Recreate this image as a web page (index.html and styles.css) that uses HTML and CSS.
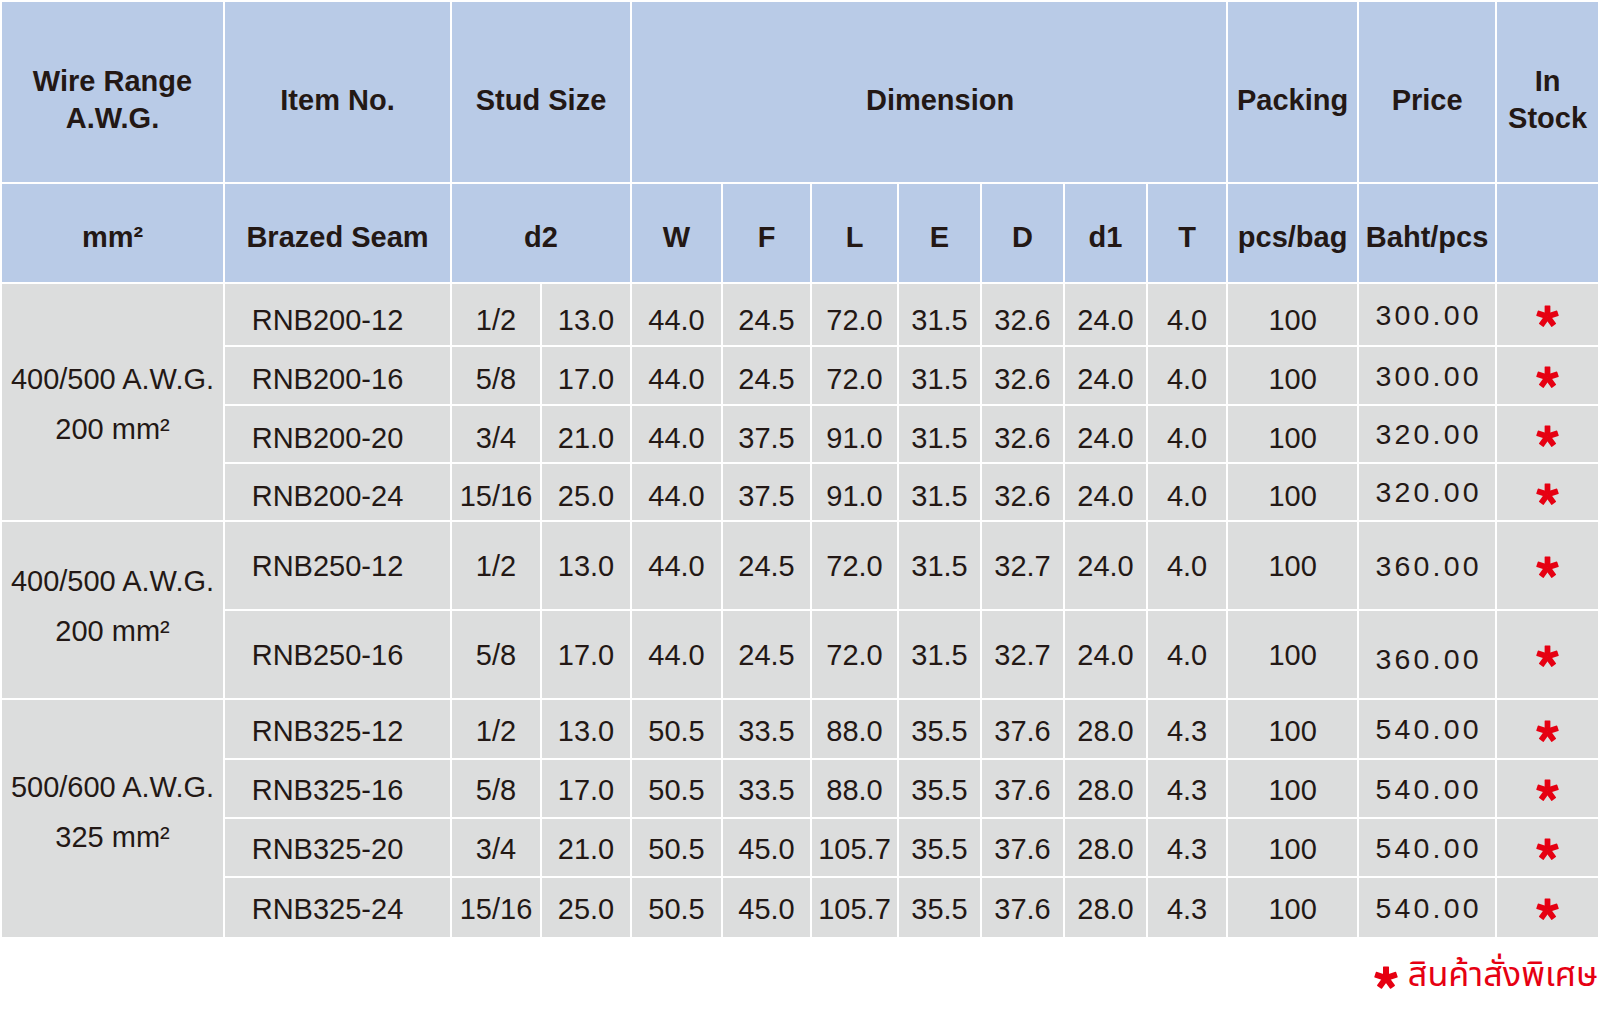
FILE: index.html
```html
<!DOCTYPE html>
<html lang="th">
<head>
<meta charset="utf-8">
<title>RNB Brazed Seam</title>
<link rel="stylesheet" href="styles.css">
</head>
<body>
<svg class="defs" width="0" height="0" aria-hidden="true">
  <defs>
    <g id="star">
      <rect x="-3" y="-11.5" width="6" height="11.5" rx="0.6"/>
      <rect x="-3" y="-11.5" width="6" height="11.5" rx="0.6" transform="rotate(72)"/>
      <rect x="-3" y="-11.5" width="6" height="11.5" rx="0.6" transform="rotate(144)"/>
      <rect x="-3" y="-11.5" width="6" height="11.5" rx="0.6" transform="rotate(216)"/>
      <rect x="-3" y="-11.5" width="6" height="11.5" rx="0.6" transform="rotate(288)"/>
    </g>
  </defs>
</svg>
<table class="spec">
  <colgroup>
    <col class="c-awg"><col class="c-item"><col class="c-d2a"><col class="c-d2b">
    <col class="c-w"><col class="c-f"><col class="c-l"><col class="c-e"><col class="c-d"><col class="c-d1"><col class="c-t">
    <col class="c-pack"><col class="c-price"><col class="c-stock">
  </colgroup>
  <thead>
    <tr class="h1">
      <th>Wire Range<br>A.W.G.</th>
      <th>Item No.</th>
      <th colspan="2">Stud Size</th>
      <th colspan="7" class="dim">Dimension</th>
      <th>Packing</th>
      <th>Price</th>
      <th>In<br>Stock</th>
    </tr>
    <tr class="h2">
      <th>mm²</th>
      <th>Brazed Seam</th>
      <th colspan="2">d2</th>
      <th>W</th><th>F</th><th>L</th><th>E</th><th>D</th><th>d1</th><th>T</th>
      <th>pcs/bag</th>
      <th>Baht/pcs</th>
      <th></th>
    </tr>
  </thead>
  <tbody>
    <tr class="r61">
      <td class="grp g1" rowspan="4"><div class="lbl">400/500 A.W.G.<br>200 mm²</div></td>
      <td class="item">RNB200-12</td><td>1/2</td><td>13.0</td>
      <td>44.0</td><td>24.5</td><td>72.0</td><td>31.5</td><td>32.6</td><td>24.0</td><td>4.0</td>
      <td>100</td><td class="price">300.00</td><td class="stock"><svg class="ast" viewBox="-12 -12 24 24"><use href="#star"/></svg></td>
    </tr>
    <tr class="r57">
      <td class="item">RNB200-16</td><td>5/8</td><td>17.0</td>
      <td>44.0</td><td>24.5</td><td>72.0</td><td>31.5</td><td>32.6</td><td>24.0</td><td>4.0</td>
      <td>100</td><td class="price">300.00</td><td class="stock"><svg class="ast" viewBox="-12 -12 24 24"><use href="#star"/></svg></td>
    </tr>
    <tr class="r56">
      <td class="item">RNB200-20</td><td>3/4</td><td>21.0</td>
      <td>44.0</td><td>37.5</td><td>91.0</td><td>31.5</td><td>32.6</td><td>24.0</td><td>4.0</td>
      <td>100</td><td class="price">320.00</td><td class="stock"><svg class="ast" viewBox="-12 -12 24 24"><use href="#star"/></svg></td>
    </tr>
    <tr class="r56">
      <td class="item">RNB200-24</td><td>15/16</td><td>25.0</td>
      <td>44.0</td><td>37.5</td><td>91.0</td><td>31.5</td><td>32.6</td><td>24.0</td><td>4.0</td>
      <td>100</td><td class="price">320.00</td><td class="stock"><svg class="ast" viewBox="-12 -12 24 24"><use href="#star"/></svg></td>
    </tr>
    <tr class="r87">
      <td class="grp g2" rowspan="2"><div class="lbl">400/500 A.W.G.<br>200 mm²</div></td>
      <td class="item">RNB250-12</td><td>1/2</td><td>13.0</td>
      <td>44.0</td><td>24.5</td><td>72.0</td><td>31.5</td><td>32.7</td><td>24.0</td><td>4.0</td>
      <td>100</td><td class="price">360.00</td><td class="stock"><svg class="ast" viewBox="-12 -12 24 24"><use href="#star"/></svg></td>
    </tr>
    <tr class="r87 low">
      <td class="item">RNB250-16</td><td>5/8</td><td>17.0</td>
      <td>44.0</td><td>24.5</td><td>72.0</td><td>31.5</td><td>32.7</td><td>24.0</td><td>4.0</td>
      <td>100</td><td class="price">360.00</td><td class="stock"><svg class="ast" viewBox="-12 -12 24 24"><use href="#star"/></svg></td>
    </tr>
    <tr class="r58 g3r">
      <td class="grp g3" rowspan="4"><div class="lbl">500/600 A.W.G.<br>325 mm²</div></td>
      <td class="item">RNB325-12</td><td>1/2</td><td>13.0</td>
      <td>50.5</td><td>33.5</td><td>88.0</td><td>35.5</td><td>37.6</td><td>28.0</td><td>4.3</td>
      <td>100</td><td class="price">540.00</td><td class="stock"><svg class="ast" viewBox="-12 -12 24 24"><use href="#star"/></svg></td>
    </tr>
    <tr class="r57 g3r">
      <td class="item">RNB325-16</td><td>5/8</td><td>17.0</td>
      <td>50.5</td><td>33.5</td><td>88.0</td><td>35.5</td><td>37.6</td><td>28.0</td><td>4.3</td>
      <td>100</td><td class="price">540.00</td><td class="stock"><svg class="ast" viewBox="-12 -12 24 24"><use href="#star"/></svg></td>
    </tr>
    <tr class="r57 g3r">
      <td class="item">RNB325-20</td><td>3/4</td><td>21.0</td>
      <td>50.5</td><td>45.0</td><td>105.7</td><td>35.5</td><td>37.6</td><td>28.0</td><td>4.3</td>
      <td>100</td><td class="price">540.00</td><td class="stock"><svg class="ast" viewBox="-12 -12 24 24"><use href="#star"/></svg></td>
    </tr>
    <tr class="r59 g3r">
      <td class="item">RNB325-24</td><td>15/16</td><td>25.0</td>
      <td>50.5</td><td>45.0</td><td>105.7</td><td>35.5</td><td>37.6</td><td>28.0</td><td>4.3</td>
      <td>100</td><td class="price">540.00</td><td class="stock"><svg class="ast" viewBox="-12 -12 24 24"><use href="#star"/></svg></td>
    </tr>
  </tbody>
</table>
<div class="note">
  <svg class="ast note-ast" viewBox="-12 -12 24 24"><use href="#star"/></svg>
  <span class="note-text">สินค้าสั่งพิเศษ</span>
</div>
</body>
</html>
```

FILE: styles.css
```css
html, body {
  margin: 0;
  padding: 0;
  background: #ffffff;
}

body {
  width: 1600px;
  height: 1010px;
  overflow: hidden;
  font-family: "Liberation Sans", Arial, sans-serif;
  color: #231815;
}

.defs {
  position: absolute;
  width: 0;
  height: 0;
}

.spec {
  border-collapse: separate;
  border-spacing: 2px;
  table-layout: fixed;
  width: 1600px;
}

.c-awg { width: 221px; }
.c-item { width: 225px; }
.c-d2a { width: 88px; }
.c-d2b { width: 88px; }
.c-w { width: 89px; }
.c-f { width: 87px; }
.c-l { width: 85px; }
.c-e { width: 81px; }
.c-d { width: 81px; }
.c-d1 { width: 81px; }
.c-t { width: 78px; }
.c-pack { width: 129px; }
.c-price { width: 136px; }
.c-stock { width: 101px; }

.spec th,
.spec td {
  padding: 0;
  text-align: center;
  vertical-align: middle;
  white-space: nowrap;
}

.spec th {
  background: #b9cbe7;
  font-weight: bold;
  font-size: 29px;
  line-height: 37px;
}

.h1 { height: 180px; }
.h1 th { padding-top: 16px; }
.h1 th.dim { padding-left: 22px; }
.h2 { height: 98px; }
.h2 th { padding-top: 9px; }

.spec td {
  background: #dcdddd;
  font-size: 29px;
  line-height: 34px;
  padding-top: 7px;
}

.r61 { height: 61px; }
.r57 { height: 57px; }
.r56 { height: 56px; }
.r58 { height: 58px; }
.r59 { height: 59px; }
.r87 { height: 87px; }

.r61 td { padding-top: 11px; }
.r87 td { padding-top: 0; }
.g3r td { padding-top: 3px; }

.spec td.grp {
  padding-top: 0;
  padding-bottom: 0;
}
.spec td.g1 { padding-top: 4px; }
.spec td.g2 { padding-bottom: 8px; }
.spec td.g3 { padding-bottom: 14px; }

.lbl {
  line-height: 50px;
}

.spec td.item {
  padding-right: 20px;
}

.spec td.price {
  font-size: 28.5px;
  letter-spacing: 3.2px;
  padding-top: 0;
  padding-left: 3px;
}

.spec .low td.price { padding-top: 8px; }

.spec td.stock {
  padding-top: 4px;
  line-height: 0;
}

.ast {
  width: 23px;
  height: 23px;
  fill: #e60012;
}

.note {
  display: flex;
  justify-content: flex-end;
  align-items: center;
  gap: 10px;
  padding-top: 12px;
  padding-right: 2px;
}

.note-ast {
  width: 24px;
  height: 24px;
  margin-top: 4px;
}

.note-text {
  font-family: "Noto Sans Thai", "Noto Sans", "DejaVu Sans", sans-serif;
  font-size: 34.2px;
  line-height: 50px;
  color: #e60012;
}
```
